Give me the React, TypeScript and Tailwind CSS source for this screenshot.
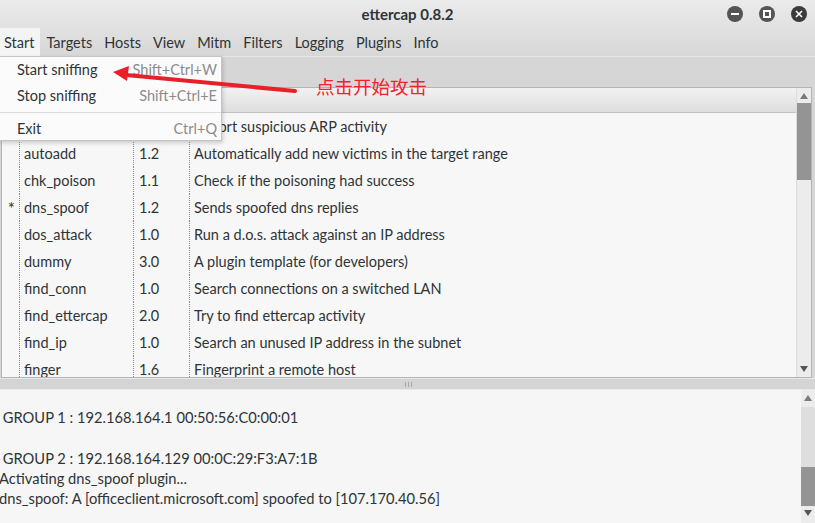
import React from "react";

const rows: [string, string, string, string][] = [
  ["", "arp_cop", "1.0", "Report suspicious ARP activity"],
  ["", "autoadd", "1.2", "Automatically add new victims in the target range"],
  ["", "chk_poison", "1.1", "Check if the poisoning had success"],
  ["*", "dns_spoof", "1.2", "Sends spoofed dns replies"],
  ["", "dos_attack", "1.0", "Run a d.o.s. attack against an IP address"],
  ["", "dummy", "3.0", "A plugin template (for developers)"],
  ["", "find_conn", "1.0", "Search connections on a switched LAN"],
  ["", "find_ettercap", "2.0", "Try to find ettercap activity"],
  ["", "find_ip", "1.0", "Search an unused IP address in the subnet"],
  ["", "finger", "1.6", "Fingerprint a remote host"],
];

const menus = ["Start", "Targets", "Hosts", "View", "Mitm", "Filters", "Logging", "Plugins", "Info"];

const logLines = [
  " GROUP 1 : 192.168.164.1 00:50:56:C0:00:01",
  "",
  " GROUP 2 : 192.168.164.129 00:0C:29:F3:A7:1B",
  "Activating dns_spoof plugin...",
  "dns_spoof: A [officeclient.microsoft.com] spoofed to [107.170.40.56]",
];

function Up() {
  return (
    <svg width="8" height="6" viewBox="0 0 8 6">
      <path d="M4 0 L8 6 L0 6 Z" fill="#7a7a7a" />
    </svg>
  );
}
function Down() {
  return (
    <svg width="8" height="6" viewBox="0 0 8 6">
      <path d="M0 0 L8 0 L4 6 Z" fill="#555" />
    </svg>
  );
}

export default function App() {
  return (
    <div className="relative w-[815px] h-[523px] overflow-hidden bg-[#d6d6d6] text-[#2e3436] font-['Lato','Noto_Sans',sans-serif] text-[14.5px] leading-none">
      {/* title + menubar */}
      <div className="bg-gradient-to-b from-[#ebebeb] to-[#d7d7d7]">
        <div className="h-[28px] grid grid-cols-[1fr_auto_1fr] items-center">
          <div />
          <div className="font-bold text-[15px] text-[#2e3436]">ettercap 0.8.2</div>
          <div className="flex justify-end items-center gap-[16px] pr-[8px]">
            <div className="w-[16px] h-[16px] rounded-full bg-[#545454] flex items-center justify-center">
              <div className="w-[8px] h-[2px] bg-white" />
            </div>
            <div className="w-[16px] h-[16px] rounded-full bg-[#545454] flex items-center justify-center">
              <div className="w-[8px] h-[8px] border-[2px] border-white" />
            </div>
            <div className="w-[16px] h-[16px] rounded-full bg-[#3b3b3b] flex items-center justify-center">
              <svg width="8" height="8" viewBox="0 0 8 8">
                <path d="M1 1 L7 7 M7 1 L1 7" stroke="white" strokeWidth="1.6" />
              </svg>
            </div>
          </div>
        </div>
        <div className="h-[28px] flex items-stretch">
          {menus.map((m, i) => (
            <div
              key={m}
              className={
                i === 0
                  ? "flex items-center pt-[2px] pl-[4px] pr-[6px] bg-[#f4f4f4]"
                  : "flex items-center pt-[2px] px-[6px]"
              }
            >
              {m}
            </div>
          ))}
        </div>
      </div>

      {/* toolbar gap */}
      <div className="h-[31px] border-t border-[#e4e4e4]" />

      {/* plugin panel */}
      <div className="ml-[1px] w-[811px] h-[291px] border border-[#b4b4b4] flex bg-[#f7f7f7]">
        <div className="flex-1 flex flex-col overflow-hidden">
          <div className="h-[25px] shrink-0 bg-gradient-to-b from-[#f2f2f2] to-[#dedede] border-b border-[#c2c2c2]" />
          {rows.map((r) => (
            <div key={r[1]} className="h-[27px] shrink-0 grid grid-cols-[17px_114px_56px_1fr]">
              <div className="flex items-center justify-end pr-[4px] text-[17px] pt-[1px]">{r[0]}</div>
              <div className="flex items-center pt-[2px] pl-[4px] border-l border-dotted border-[#8a8a8a] whitespace-nowrap">{r[1]}</div>
              <div className="flex items-center pt-[2px] pl-[5px] border-l border-dotted border-[#8a8a8a]">{r[2]}</div>
              <div className="flex items-center pt-[2px] pl-[4px] border-l border-dotted border-[#8a8a8a] whitespace-nowrap">{r[3]}</div>
            </div>
          ))}
        </div>
        <div className="w-[15px] shrink-0 bg-[#ececec] flex flex-col border-l border-[#dcdcdc]">
          <div className="h-[15px] flex items-center justify-center pt-[1px]"><Up /></div>
          <div className="h-[77px] bg-[#949494]" />
          <div className="flex-1" />
          <div className="h-[16px] flex items-center justify-center"><Down /></div>
        </div>
      </div>

      {/* pane handle */}
      <div className="h-[12px] border-t border-[#e8e8e8] border-b border-[#b9b9b9] bg-[#d4d4d4] flex items-center justify-center gap-[2px] pl-[2px]">
        <div className="w-[1px] h-[5px] bg-[#a8a8a8]" />
        <div className="w-[1px] h-[5px] bg-[#a8a8a8]" />
        <div className="w-[1px] h-[5px] bg-[#a8a8a8]" />
      </div>

      {/* log area */}
      <div className="h-[133px] flex bg-[#f6f6f6] text-[14.7px]">
        <div className="flex-1 overflow-hidden pt-[17px] -ml-[1px]">
          {logLines.map((l, i) => (
            <div key={i} className="h-[20.25px] leading-[20px] whitespace-pre">{l}</div>
          ))}
        </div>
        <div className="w-[14px] shrink-0 bg-[#dedede] flex flex-col">
          <div className="h-[18px] bg-[#ececec] flex items-center justify-center"><Up /></div>
          <div className="h-[65px]" />
          <div className="h-[42px] bg-[#949494]" />
          <div className="h-[18px] bg-[#ececec] flex items-start justify-center pt-[4px]"><Down /></div>
        </div>
      </div>

      {/* dropdown menu */}
      <div className="absolute left-0 top-[56px] w-[222px] bg-[#fbfbfb] border border-l-0 border-[#c4c4c4] shadow-[1px_2px_4px_rgba(0,0,0,0.18)]">
        <div className="h-[25px] flex items-center justify-between pt-[2px] pl-[17px] pr-[4px]">
          <span>Start sniffing</span>
          <span className="text-[#8c8c8c]">Shift+Ctrl+W</span>
        </div>
        <div className="h-[26px] flex items-center justify-between pt-[2px] pl-[17px] pr-[4px]">
          <span>Stop sniffing</span>
          <span className="text-[#8c8c8c]">Shift+Ctrl+E</span>
        </div>
        <div className="h-[8px] flex items-center">
          <div className="w-full h-[1px] bg-[#dcdcdc]" />
        </div>
        <div className="h-[24px] flex items-center justify-between pt-[2px] pl-[17px] pr-[4px]">
          <span>Exit</span>
          <span className="text-[#8c8c8c]">Ctrl+Q</span>
        </div>
      </div>

      {/* annotation arrow */}
      <svg className="absolute left-0 top-0 pointer-events-none" width="815" height="523">
        <path d="M126 75 L295 91" stroke="#e8202a" strokeWidth="4" strokeLinecap="round" />
        <path d="M113 72 L129 66 L127 81 Z" fill="#e8202a" />
      </svg>
      <div className="absolute left-[316px] top-[77px] text-[18.5px] text-[#f0222b] font-['Noto_Sans_CJK_SC',sans-serif] leading-none">
        点击开始攻击
      </div>
    </div>
  );
}
